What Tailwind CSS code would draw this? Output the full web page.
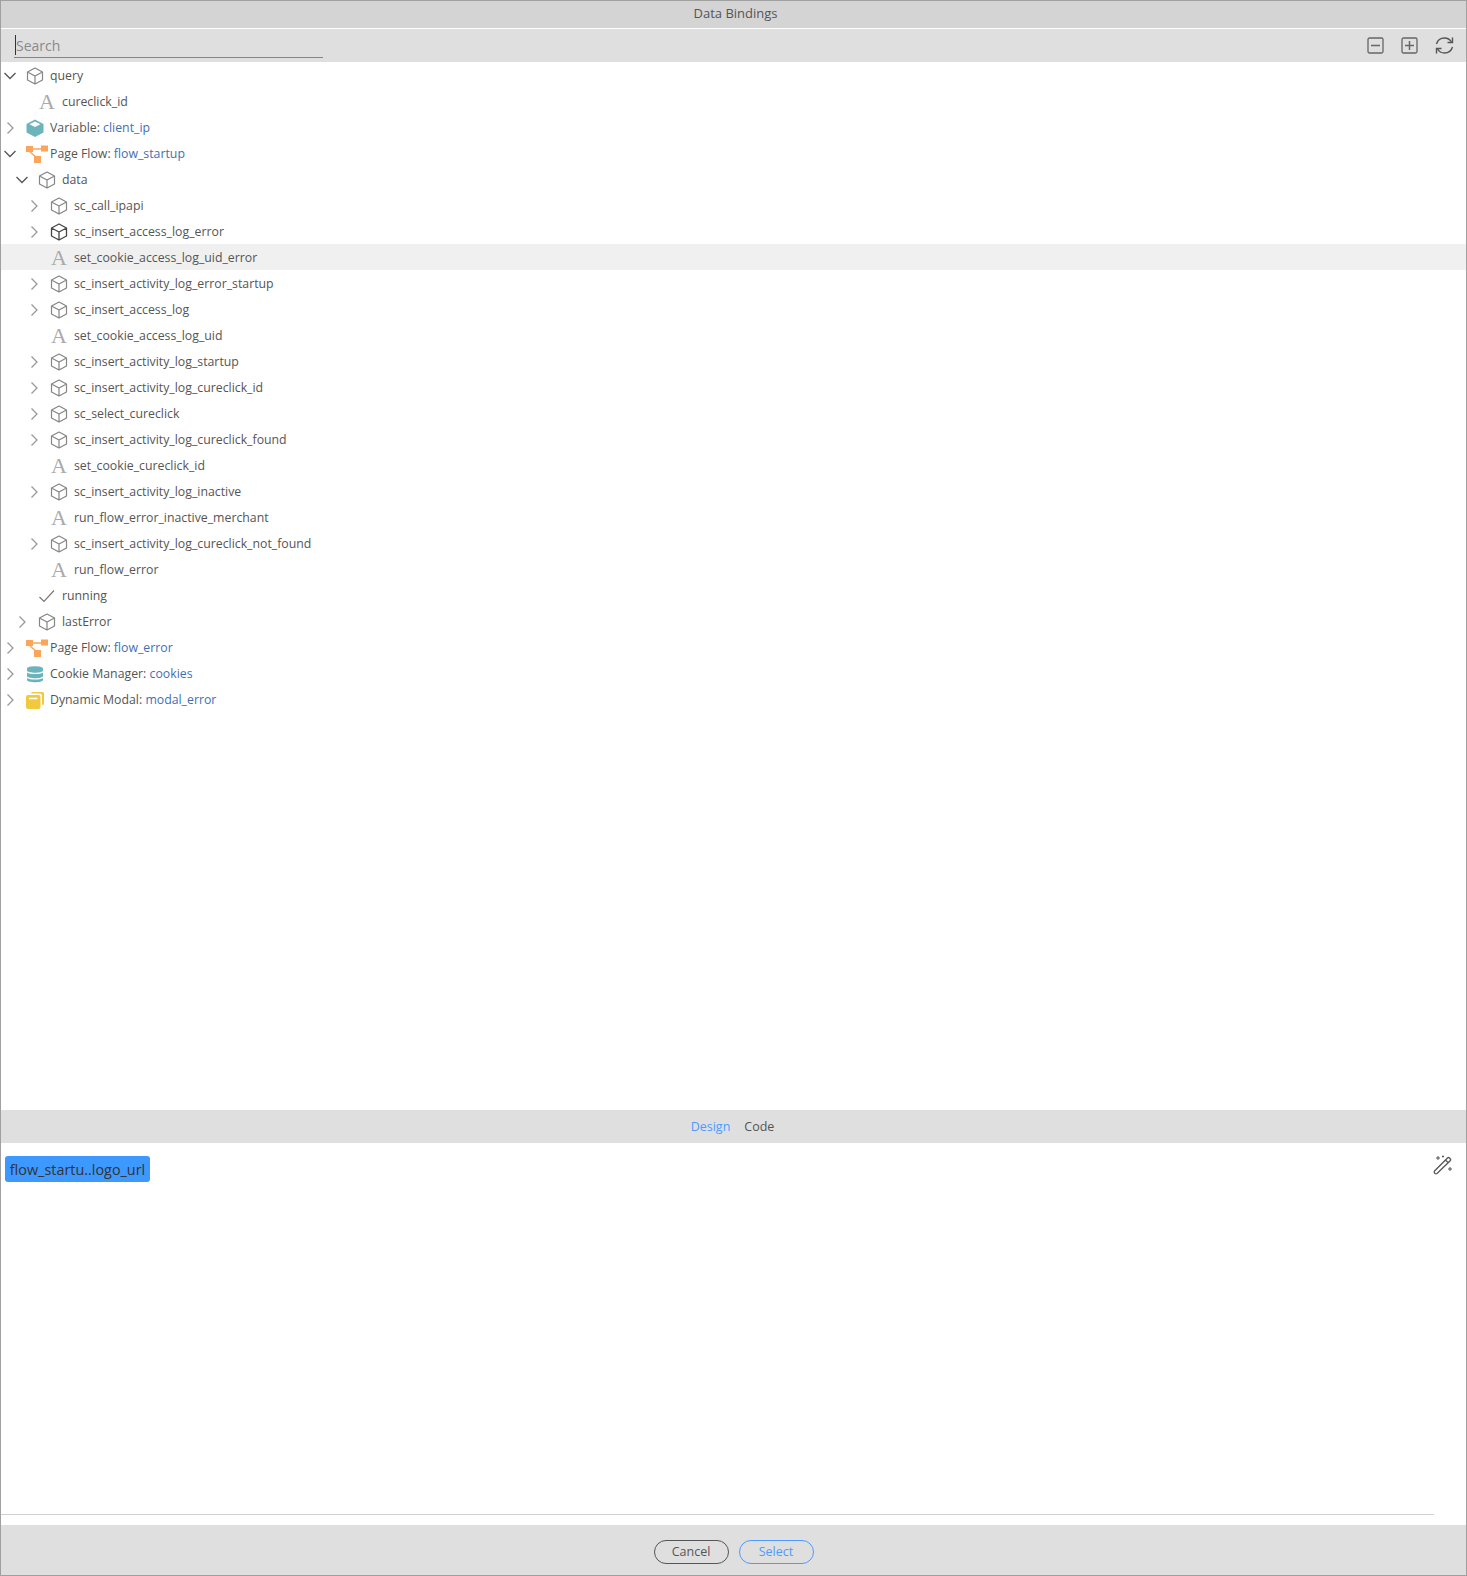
<!DOCTYPE html>
<html lang="en">
<head>
    <meta charset="UTF-8">
    <title>Data Bindings</title>
    <script src="https://cdn.jsdelivr.net/npm/@tailwindcss/browser@4"></script>
</head>
<body class="h-screen overflow-hidden bg-white font-['Open_Sans',sans-serif] text-[12.3px] text-[#555]">
    <!-- icon sprite -->
    <svg class="hidden">
        <symbol id="down" viewBox="0 0 14 14"><path d="M1.500 4 7 9.500 12.500 4" fill="none" stroke="#555" stroke-width="1.300"/></symbol>
        <symbol id="right" viewBox="0 0 14 14"><path d="M4.500 1.500 10 7 4.500 12.500" fill="none" stroke="#999" stroke-width="1.300"/></symbol>
        <symbol id="cube" viewBox="0 0 18 18"><path d="M9 1 16.500 5v8L9 17 1.500 13V5zM1.500 5 9 9l7.500-4M9 9v8" fill="none" stroke="#858585" stroke-width="1.200" stroke-linejoin="round"/></symbol>
        <symbol id="cube-dark" viewBox="0 0 18 18"><path d="M9 1 16.500 5v8L9 17 1.500 13V5zM1.500 5 9 9l7.500-4M9 9v8" fill="none" stroke="#444" stroke-width="1.300" stroke-linejoin="round"/></symbol>
        <symbol id="cube-teal" viewBox="0 0 18 18"><path d="M9 .5 17.500 5v8.500L9 18 .5 13.500V5z" fill="#6cb4bc"/><path d="M3.500 5.200 9 2.500l5.500 2.700L9 8z" fill="#fff"/></symbol>
        <symbol id="flow" viewBox="0 0 22 18"><path d="M0 1h7v6H0zM15 .5h7v6h-7zM8 11h7v7H8z" fill="#f9a65a"/><path d="M7 4h8M4 7l6 5" fill="none" stroke="#f9a65a" stroke-width="1.500"/></symbol>
        <symbol id="db" viewBox="0 0 18 18"><path d="M1 3.500C1 .5 17 .5 17 3.500v2C17 8.500 1 8.500 1 5.500zM1 7.500c3 2 13 2 16 0v3.500C17 14 1 14 1 11zM1 13c3 2 13 2 16 0v2C17 18 1 18 1 15z" fill="#6cb4bc"/></symbol>
        <symbol id="modal" viewBox="0 0 18 18"><path d="M5 2.500q0-1.500 1.500-1.500h10q1.500 0 1.500 1.500v10q0 1.500-1.500 1.500H16V5q0-2.500-2.500-2.500z" fill="#f0c93f"/><rect x="0" y="4" width="14.500" height="14" rx="2" fill="#f0c93f"/><path d="M3 7.500h8.500" stroke="#fff" stroke-width="1.500"/></symbol>
        <symbol id="check" viewBox="0 0 18 18"><path d="M1.500 10 6 14.500 16 3.500" fill="none" stroke="#777" stroke-width="1.200"/></symbol>
    </svg>

    <div class="flex h-[1576px] flex-col border border-[#a0a0a0]">
        <div class="flex h-[27px] shrink-0 items-center justify-center bg-[#d4d4d4] pb-[2px] pl-[4px] text-[13px] text-[#555]">Data Bindings</div>
        <div class="mt-px flex h-[33px] shrink-0 items-start justify-between bg-[#dfdfdf] pl-[13px] pr-[12px]">
            <div class="relative h-[29px] w-[309px] border-b border-[#4a90e2] pl-[2px] pt-[6px] text-[14px] leading-[22px] text-[#8a8a8a]">
                <span class="absolute left-[1px] top-[6px] h-[20px] w-px bg-[#333]"></span>Search
            </div>
            <div class="flex items-center gap-[17px] pt-[7px]">
                <svg class="h-[17px] w-[17px]" viewBox="0 0 17 17"><rect x="1" y="1" width="15" height="15" rx="1.500" fill="none" stroke="#666" stroke-width="1.300"/><path d="M4 8.500h9" stroke="#666" stroke-width="1.500"/></svg>
                <svg class="h-[17px] w-[17px]" viewBox="0 0 17 17"><rect x="1" y="1" width="15" height="15" rx="1.500" fill="none" stroke="#666" stroke-width="1.300"/><path d="M4 8.500h9M8.500 4v9" stroke="#666" stroke-width="1.500"/></svg>
                <svg class="h-[19px] w-[19px]" viewBox="0 0 19 19"><path d="M1.500 8C2.500 4.500 5.500 2 9.500 2c3 0 5.500 1.500 7 4M17.500 11c-1 3.500-4 6-8 6-3 0-5.500-1.500-7-4" fill="none" stroke="#555" stroke-width="1.400"/><path d="M17.500 1.500V6.500H12.500M1.500 17.500V12.500H6.500" fill="none" stroke="#555" stroke-width="1.400"/></svg>
            </div>
        </div>

        <!-- tree -->
        <div class="flex-1 overflow-hidden bg-white">
            <div class="flex h-[26px] items-center pl-[2px] pt-[2px]"><svg class="h-[14px] w-[14px]"><use href="#down"/></svg><svg class="ml-[9px] h-[18px] w-[18px]"><use href="#cube"/></svg><span class="ml-[6px]">query</span></div>
            <div class="flex h-[26px] items-center pl-[14px] pt-[2px]"><span class="w-[14px]"></span><span class="ml-[9px] w-[18px] text-center font-['Liberation_Serif',serif] text-[22px] leading-none text-[#aaa]">A</span><span class="ml-[6px]">cureclick_id</span></div>
            <div class="flex h-[26px] items-center pl-[2px] pt-[2px]"><svg class="h-[14px] w-[14px]"><use href="#right"/></svg><svg class="ml-[9px] h-[18px] w-[18px]"><use href="#cube-teal"/></svg><span class="ml-[6px]">Variable: <span class="text-[#3f6fb5]">client_ip</span></span></div>
            <div class="flex h-[26px] items-center pl-[2px] pt-[2px]"><svg class="h-[14px] w-[14px]"><use href="#down"/></svg><svg class="ml-[9px] h-[18px] w-[22px]"><use href="#flow"/></svg><span class="ml-[2px]">Page Flow: <span class="text-[#3f6fb5]">flow_startup</span></span></div>
            <div class="flex h-[26px] items-center pl-[14px] pt-[2px]"><svg class="h-[14px] w-[14px]"><use href="#down"/></svg><svg class="ml-[9px] h-[18px] w-[18px]"><use href="#cube"/></svg><span class="ml-[6px]">data</span></div>
            <div class="flex h-[26px] items-center pl-[26px] pt-[2px]"><svg class="h-[14px] w-[14px]"><use href="#right"/></svg><svg class="ml-[9px] h-[18px] w-[18px]"><use href="#cube"/></svg><span class="ml-[6px]">sc_call_ipapi</span></div>
            <div class="flex h-[26px] items-center pl-[26px] pt-[2px]"><svg class="h-[14px] w-[14px]"><use href="#right"/></svg><svg class="ml-[9px] h-[18px] w-[18px]"><use href="#cube-dark"/></svg><span class="ml-[6px]">sc_insert_access_log_error</span></div>
            <div class="flex h-[26px] items-center bg-[#f0f0f0] pl-[26px] pt-[2px]"><span class="w-[14px]"></span><span class="ml-[9px] w-[18px] text-center font-['Liberation_Serif',serif] text-[22px] leading-none text-[#aaa]">A</span><span class="ml-[6px]">set_cookie_access_log_uid_error</span></div>
            <div class="flex h-[26px] items-center pl-[26px] pt-[2px]"><svg class="h-[14px] w-[14px]"><use href="#right"/></svg><svg class="ml-[9px] h-[18px] w-[18px]"><use href="#cube"/></svg><span class="ml-[6px]">sc_insert_activity_log_error_startup</span></div>
            <div class="flex h-[26px] items-center pl-[26px] pt-[2px]"><svg class="h-[14px] w-[14px]"><use href="#right"/></svg><svg class="ml-[9px] h-[18px] w-[18px]"><use href="#cube"/></svg><span class="ml-[6px]">sc_insert_access_log</span></div>
            <div class="flex h-[26px] items-center pl-[26px] pt-[2px]"><span class="w-[14px]"></span><span class="ml-[9px] w-[18px] text-center font-['Liberation_Serif',serif] text-[22px] leading-none text-[#aaa]">A</span><span class="ml-[6px]">set_cookie_access_log_uid</span></div>
            <div class="flex h-[26px] items-center pl-[26px] pt-[2px]"><svg class="h-[14px] w-[14px]"><use href="#right"/></svg><svg class="ml-[9px] h-[18px] w-[18px]"><use href="#cube"/></svg><span class="ml-[6px]">sc_insert_activity_log_startup</span></div>
            <div class="flex h-[26px] items-center pl-[26px] pt-[2px]"><svg class="h-[14px] w-[14px]"><use href="#right"/></svg><svg class="ml-[9px] h-[18px] w-[18px]"><use href="#cube"/></svg><span class="ml-[6px]">sc_insert_activity_log_cureclick_id</span></div>
            <div class="flex h-[26px] items-center pl-[26px] pt-[2px]"><svg class="h-[14px] w-[14px]"><use href="#right"/></svg><svg class="ml-[9px] h-[18px] w-[18px]"><use href="#cube"/></svg><span class="ml-[6px]">sc_select_cureclick</span></div>
            <div class="flex h-[26px] items-center pl-[26px] pt-[2px]"><svg class="h-[14px] w-[14px]"><use href="#right"/></svg><svg class="ml-[9px] h-[18px] w-[18px]"><use href="#cube"/></svg><span class="ml-[6px]">sc_insert_activity_log_cureclick_found</span></div>
            <div class="flex h-[26px] items-center pl-[26px] pt-[2px]"><span class="w-[14px]"></span><span class="ml-[9px] w-[18px] text-center font-['Liberation_Serif',serif] text-[22px] leading-none text-[#aaa]">A</span><span class="ml-[6px]">set_cookie_cureclick_id</span></div>
            <div class="flex h-[26px] items-center pl-[26px] pt-[2px]"><svg class="h-[14px] w-[14px]"><use href="#right"/></svg><svg class="ml-[9px] h-[18px] w-[18px]"><use href="#cube"/></svg><span class="ml-[6px]">sc_insert_activity_log_inactive</span></div>
            <div class="flex h-[26px] items-center pl-[26px] pt-[2px]"><span class="w-[14px]"></span><span class="ml-[9px] w-[18px] text-center font-['Liberation_Serif',serif] text-[22px] leading-none text-[#aaa]">A</span><span class="ml-[6px]">run_flow_error_inactive_merchant</span></div>
            <div class="flex h-[26px] items-center pl-[26px] pt-[2px]"><svg class="h-[14px] w-[14px]"><use href="#right"/></svg><svg class="ml-[9px] h-[18px] w-[18px]"><use href="#cube"/></svg><span class="ml-[6px]">sc_insert_activity_log_cureclick_not_found</span></div>
            <div class="flex h-[26px] items-center pl-[26px] pt-[2px]"><span class="w-[14px]"></span><span class="ml-[9px] w-[18px] text-center font-['Liberation_Serif',serif] text-[22px] leading-none text-[#aaa]">A</span><span class="ml-[6px]">run_flow_error</span></div>
            <div class="flex h-[26px] items-center pl-[14px] pt-[2px]"><span class="w-[14px]"></span><svg class="ml-[9px] h-[18px] w-[18px]"><use href="#check"/></svg><span class="ml-[6px]">running</span></div>
            <div class="flex h-[26px] items-center pl-[14px] pt-[2px]"><svg class="h-[14px] w-[14px]"><use href="#right"/></svg><svg class="ml-[9px] h-[18px] w-[18px]"><use href="#cube"/></svg><span class="ml-[6px]">lastError</span></div>
            <div class="flex h-[26px] items-center pl-[2px] pt-[2px]"><svg class="h-[14px] w-[14px]"><use href="#right"/></svg><svg class="ml-[9px] h-[18px] w-[22px]"><use href="#flow"/></svg><span class="ml-[2px]">Page Flow: <span class="text-[#3f6fb5]">flow_error</span></span></div>
            <div class="flex h-[26px] items-center pl-[2px] pt-[2px]"><svg class="h-[14px] w-[14px]"><use href="#right"/></svg><svg class="ml-[9px] h-[18px] w-[18px]"><use href="#db"/></svg><span class="ml-[6px]">Cookie Manager: <span class="text-[#3f6fb5]">cookies</span></span></div>
            <div class="flex h-[26px] items-center pl-[2px] pt-[2px]"><svg class="h-[14px] w-[14px]"><use href="#right"/></svg><svg class="ml-[9px] h-[18px] w-[18px]"><use href="#modal"/></svg><span class="ml-[6px]">Dynamic Modal: <span class="text-[#3f6fb5]">modal_error</span></span></div>
        </div>

        <!-- design / code tabs -->
        <div class="flex h-[33px] shrink-0 items-center justify-center gap-[14px] bg-[#dfdfdf] pr-[2px] pt-[2px] text-[12.5px]">
            <span class="text-[#4d9bff]">Design</span><span>Code</span>
        </div>

        <!-- editor -->
        <div class="relative h-[371px] shrink-0 bg-white">
            <div class="absolute left-[4px] top-[13px] flex h-[26px] w-[145px] items-center justify-center rounded-[3px] bg-[#3d99ff] pt-[2px] text-[14.4px] text-[#333]">flow_startu..logo_url</div>
            <svg class="absolute right-[13px] top-[12px] h-[20px] w-[20px]" viewBox="0 0 20 20"><path d="M1.500 16 14.500 3q1-1 2 0l.7.7q1 1 0 2L4 18.500q-1 .7-2 0l-.5-.5q-.7-1 0-2zM12.500 5l2.700 2.700" fill="none" stroke="#555" stroke-width="1.300"/><path d="M5 1v4M3 3h4M17 12v4M15 14h4M10 .5v2M9 1.500h2" stroke="#555"/></svg>
        </div>
        <div class="h-[11px] shrink-0 bg-white"><div class="h-px w-[1433px] bg-[#d0d0d0]"></div></div>

        <!-- footer -->
        <div class="flex h-[50px] shrink-0 items-start justify-center gap-[10px] bg-[#dfdfdf] pt-[15px] text-[12.5px]">
            <button class="h-[24px] w-[75px] rounded-full border border-[#555] pt-px text-[#555]">Cancel</button>
            <button class="h-[24px] w-[75px] rounded-full border border-[#4d9bff] pt-px text-[#4d9bff]">Select</button>
        </div>
    </div>
</body>
</html>
